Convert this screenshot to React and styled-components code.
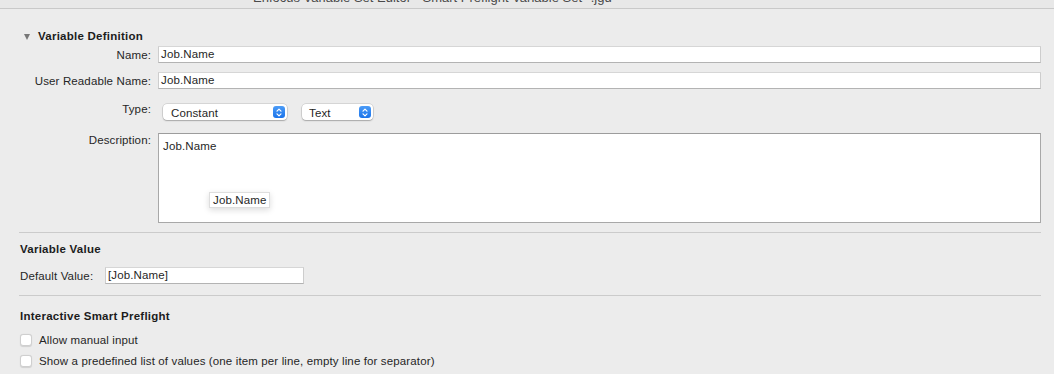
import React from "react"
import styled, { createGlobalStyle } from "styled-components"

const GlobalStyle = createGlobalStyle`
  html, body {
    margin: 0;
    padding: 0;
    background: #ececec;
  }

  body {
    font-family: "Liberation Sans", Arial, sans-serif;
    font-size: 11.5px;
    letter-spacing: 0.13px;
    color: #222;
    -webkit-font-smoothing: antialiased;
  }
`

const Window = styled.div`
  width: 1054px;
  height: 374px;
  overflow: hidden;
  background: #ececec;
  display: flex;
  flex-direction: column;
`

const TitleBar = styled.div`
  height: 8px;
  overflow: hidden;
  border-bottom: 1px solid #c9c9c9;
  background: #e8e8e8;
  padding-left: 253px;

  > span {
    display: block;
    margin-top: -10px;
    font-size: 13px;
    letter-spacing: 0;
    line-height: 16px;
    color: #4a4a4a;
    white-space: nowrap;
  }
`

const Content = styled.div`
  display: flex;
  flex-direction: column;
  padding: 20px 13px 0 20px;
`

const Disclosure = styled.div`
  display: flex;
  align-items: center;
  height: 14px;
  gap: 8px;
  padding-left: 4px;
`

const Triangle = styled.span`
  width: 0;
  height: 0;
  border-left: 3.5px solid transparent;
  border-right: 3.5px solid transparent;
  border-top: 6px solid #777;
  margin-top: 1px;
`

const Heading = styled.div`
  font-weight: bold;
  font-size: 11.5px;
  letter-spacing: 0.25px;
  line-height: 14px;
  height: 14px;
  color: #1c1c1c;
  margin-top: ${(p) => p.$top || 0}px;
`

const Row = styled.div`
  display: flex;
  align-items: ${(p) => (p.$top ? "flex-start" : "center")};
  gap: 7px;
  margin-top: ${(p) => p.$gap || 0}px;
`

const Label = styled.div`
  width: ${(p) => p.$width || 131}px;
  flex: none;
  text-align: ${(p) => p.$align || "right"};
  line-height: 14px;
  white-space: nowrap;
  color: #262626;
  margin-top: ${(p) => p.$offset || 0}px;
`

const TextField = styled.div`
  box-sizing: border-box;
  height: 17px;
  width: ${(p) => (p.$width ? `${p.$width}px` : "auto")};
  flex: ${(p) => (p.$width ? "none" : "1")};
  background: #fff;
  border: 1px solid #cdcdcd;
  border-top-color: #d6d6d6;
  border-bottom-color: #b3b3b3;
  padding: 0 2px;
  line-height: 15px;
  color: #1f1f1f;
  white-space: nowrap;
`

const Popups = styled.div`
  display: flex;
  gap: 15px;
  padding-left: 5px;
`

const Popup = styled.div`
  box-sizing: border-box;
  width: ${(p) => p.$width}px;
  height: 16px;
  background: #fff;
  border-radius: 4px;
  box-shadow: 0 0 0 0.5px rgba(0, 0, 0, 0.18), 0 1px 1.5px rgba(0, 0, 0, 0.22);
  display: flex;
  align-items: center;
  justify-content: space-between;
  padding: 1px 2px 0 ${(p) => p.$pad}px;
  color: #1f1f1f;
  line-height: 14px;
`

const Stepper = styled.span`
  width: 12px;
  height: 12px;
  margin-top: -1px;
  border-radius: 3px;
  background: linear-gradient(#4c9cf7, #1a73ea);
  display: flex;
  align-items: center;
  justify-content: center;
`

const DescriptionBox = styled.div`
  position: relative;
  box-sizing: border-box;
  flex: 1;
  height: 90px;
  background: #fff;
  border: 1px solid #a8a8a8;
  border-top-color: #9c9c9c;
  padding: 5px 4px;
  line-height: 14px;
  color: #1f1f1f;
`

const Tooltip = styled.div`
  position: absolute;
  left: 50px;
  top: 58px;
  height: 16px;
  box-sizing: border-box;
  padding: 0 3px;
  background: #fff;
  border: 1px solid #dedede;
  box-shadow: 0 2px 6px rgba(0, 0, 0, 0.14);
  line-height: 14px;
  color: #262626;
  white-space: nowrap;
`

const Separator = styled.div`
  height: 1px;
  background: #cbcbcb;
  margin-top: ${(p) => p.$gap || 0}px;
  margin-left: -1px;
`

const CheckRow = styled.label`
  display: flex;
  align-items: center;
  gap: 7px;
  height: 14px;
  margin-top: ${(p) => p.$gap || 0}px;
  line-height: 14px;
  color: #262626;
`

const Box = styled.span`
  box-sizing: border-box;
  width: 12px;
  height: 12px;
  border-radius: 3px;
  background: #fff;
  border: 1px solid #cfcfcf;
  box-shadow: 0 0.5px 1px rgba(0, 0, 0, 0.12);
`

const Chevrons = () => (
  <svg width="6" height="9" viewBox="0 0 6 9" fill="none">
    <path d="M1 3.2 L3 1.2 L5 3.2" stroke="#fff" strokeWidth="1.2" strokeLinecap="round" strokeLinejoin="round" />
    <path d="M1 5.8 L3 7.8 L5 5.8" stroke="#fff" strokeWidth="1.2" strokeLinecap="round" strokeLinejoin="round" />
  </svg>
)

const App = () => {
  return (
    <Window>
      <GlobalStyle />
      <TitleBar>
        <span>Enfocus Variable Set Editor - Smart Preflight Variable Set *.jgd</span>
      </TitleBar>
      <Content>
        <Disclosure>
          <Triangle />
          <Heading>Variable Definition</Heading>
        </Disclosure>

        <Row $gap={3}>
          <Label>Name:</Label>
          <TextField>Job.Name</TextField>
        </Row>

        <Row $gap={9}>
          <Label>User Readable Name:</Label>
          <TextField>Job.Name</TextField>
        </Row>

        <Row $gap={15} $top>
          <Label $offset={-2}>Type:</Label>
          <Popups>
            <Popup $width={124} $pad={8}>
              Constant
              <Stepper>
                <Chevrons />
              </Stepper>
            </Popup>
            <Popup $width={71} $pad={7}>
              Text
              <Stepper>
                <Chevrons />
              </Stepper>
            </Popup>
          </Popups>
        </Row>

        <Row $gap={13} $top>
          <Label $offset={0}>Description:</Label>
          <DescriptionBox>
            Job.Name
            <Tooltip>Job.Name</Tooltip>
          </DescriptionBox>
        </Row>

        <Separator $gap={9} />

        <Heading $top={9}>Variable Value</Heading>

        <Row $gap={11}>
          <Label $width={78} $align="left">Default Value:</Label>
          <TextField $width={199}>[Job.Name]</TextField>
        </Row>

        <Separator $gap={11} />

        <Heading $top={13}>Interactive Smart Preflight</Heading>

        <CheckRow $gap={10}>
          <Box />
          Allow manual input
        </CheckRow>
        <CheckRow $gap={7}>
          <Box />
          Show a predefined list of values (one item per line, empty line for separator)
        </CheckRow>
      </Content>
    </Window>
  )
}

export default App
